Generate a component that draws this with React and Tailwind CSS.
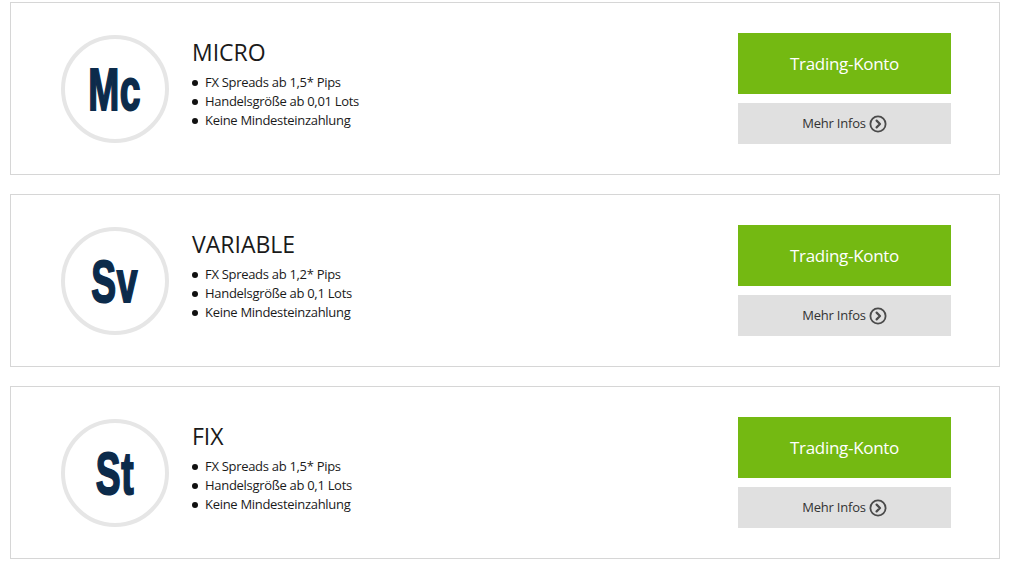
import React from "react";

const plans = [
  { abbr: "Mc", name: "MICRO", lines: ["FX Spreads ab 1,5* Pips", "Handelsgröße ab 0,01 Lots", "Keine Mindesteinzahlung"] },
  { abbr: "Sv", name: "VARIABLE", lines: ["FX Spreads ab 1,2* Pips", "Handelsgröße ab 0,1 Lots", "Keine Mindesteinzahlung"] },
  { abbr: "St", name: "FIX", lines: ["FX Spreads ab 1,5* Pips", "Handelsgröße ab 0,1 Lots", "Keine Mindesteinzahlung"] },
];

function ChevronCircle() {
  return (
    <svg width="18" height="18" viewBox="0 0 18 18" className="ml-[3px]">
      <circle cx="9" cy="9" r="7.6" fill="none" stroke="#4a4a4a" strokeWidth="1.8" />
      <path d="M7.6 5.6 L11 9 L7.6 12.4" fill="none" stroke="#4a4a4a" strokeWidth="2.2" strokeLinecap="round" strokeLinejoin="round" />
    </svg>
  );
}

function PlanCard({ plan }) {
  return (
    <div className="h-[173px] border border-[#d6d6d6] bg-white flex items-center pl-[50px] pr-[48px]">
      <div className="w-[108px] h-[108px] rounded-full border-[4px] border-[#e6e6e6] flex items-center justify-center shrink-0">
        <span className="inline-block text-[#0c2b4b] font-bold text-[60px] leading-none tracking-[1px] scale-x-[0.62] mt-[3px] font-['Liberation_Sans',Arial,sans-serif] [-webkit-text-stroke:2px_#0c2b4b]">
          {plan.abbr}
        </span>
      </div>
      <div className="ml-[23px] flex-1 self-start pt-[34px] font-['Open_Sans',sans-serif] text-[#1a1a1a]">
        <h2 className="text-[23px] leading-[30px]">{plan.name}</h2>
        <ul className="mt-[6px]">
          {plan.lines.map((l, i) => (
            <li key={i} className="flex items-center h-[19px] text-[13px] tracking-[-0.3px]">
              <span className="w-[6px] h-[6px] rounded-full bg-[#111] mr-[7px]" />
              {l}
            </li>
          ))}
        </ul>
      </div>
      <div className="w-[213px] flex flex-col gap-[9px] font-['Open_Sans',sans-serif]">
        <button className="h-[61px] bg-[#74b912] text-white text-[17px] tracking-[-0.3px]">Trading-Konto</button>
        <button className="h-[41px] bg-[#e0e0e0] text-[#333] text-[13px] tracking-[-0.2px] flex items-center justify-center">
          Mehr Infos
          <ChevronCircle />
        </button>
      </div>
    </div>
  );
}

export default function App() {
  return (
    <div className="w-[1009px] h-[568px] bg-white pt-[2px] pl-[10px] pr-[9px] flex flex-col gap-[19px]">
      {plans.map((p) => (
        <PlanCard key={p.name} plan={p} />
      ))}
    </div>
  );
}
